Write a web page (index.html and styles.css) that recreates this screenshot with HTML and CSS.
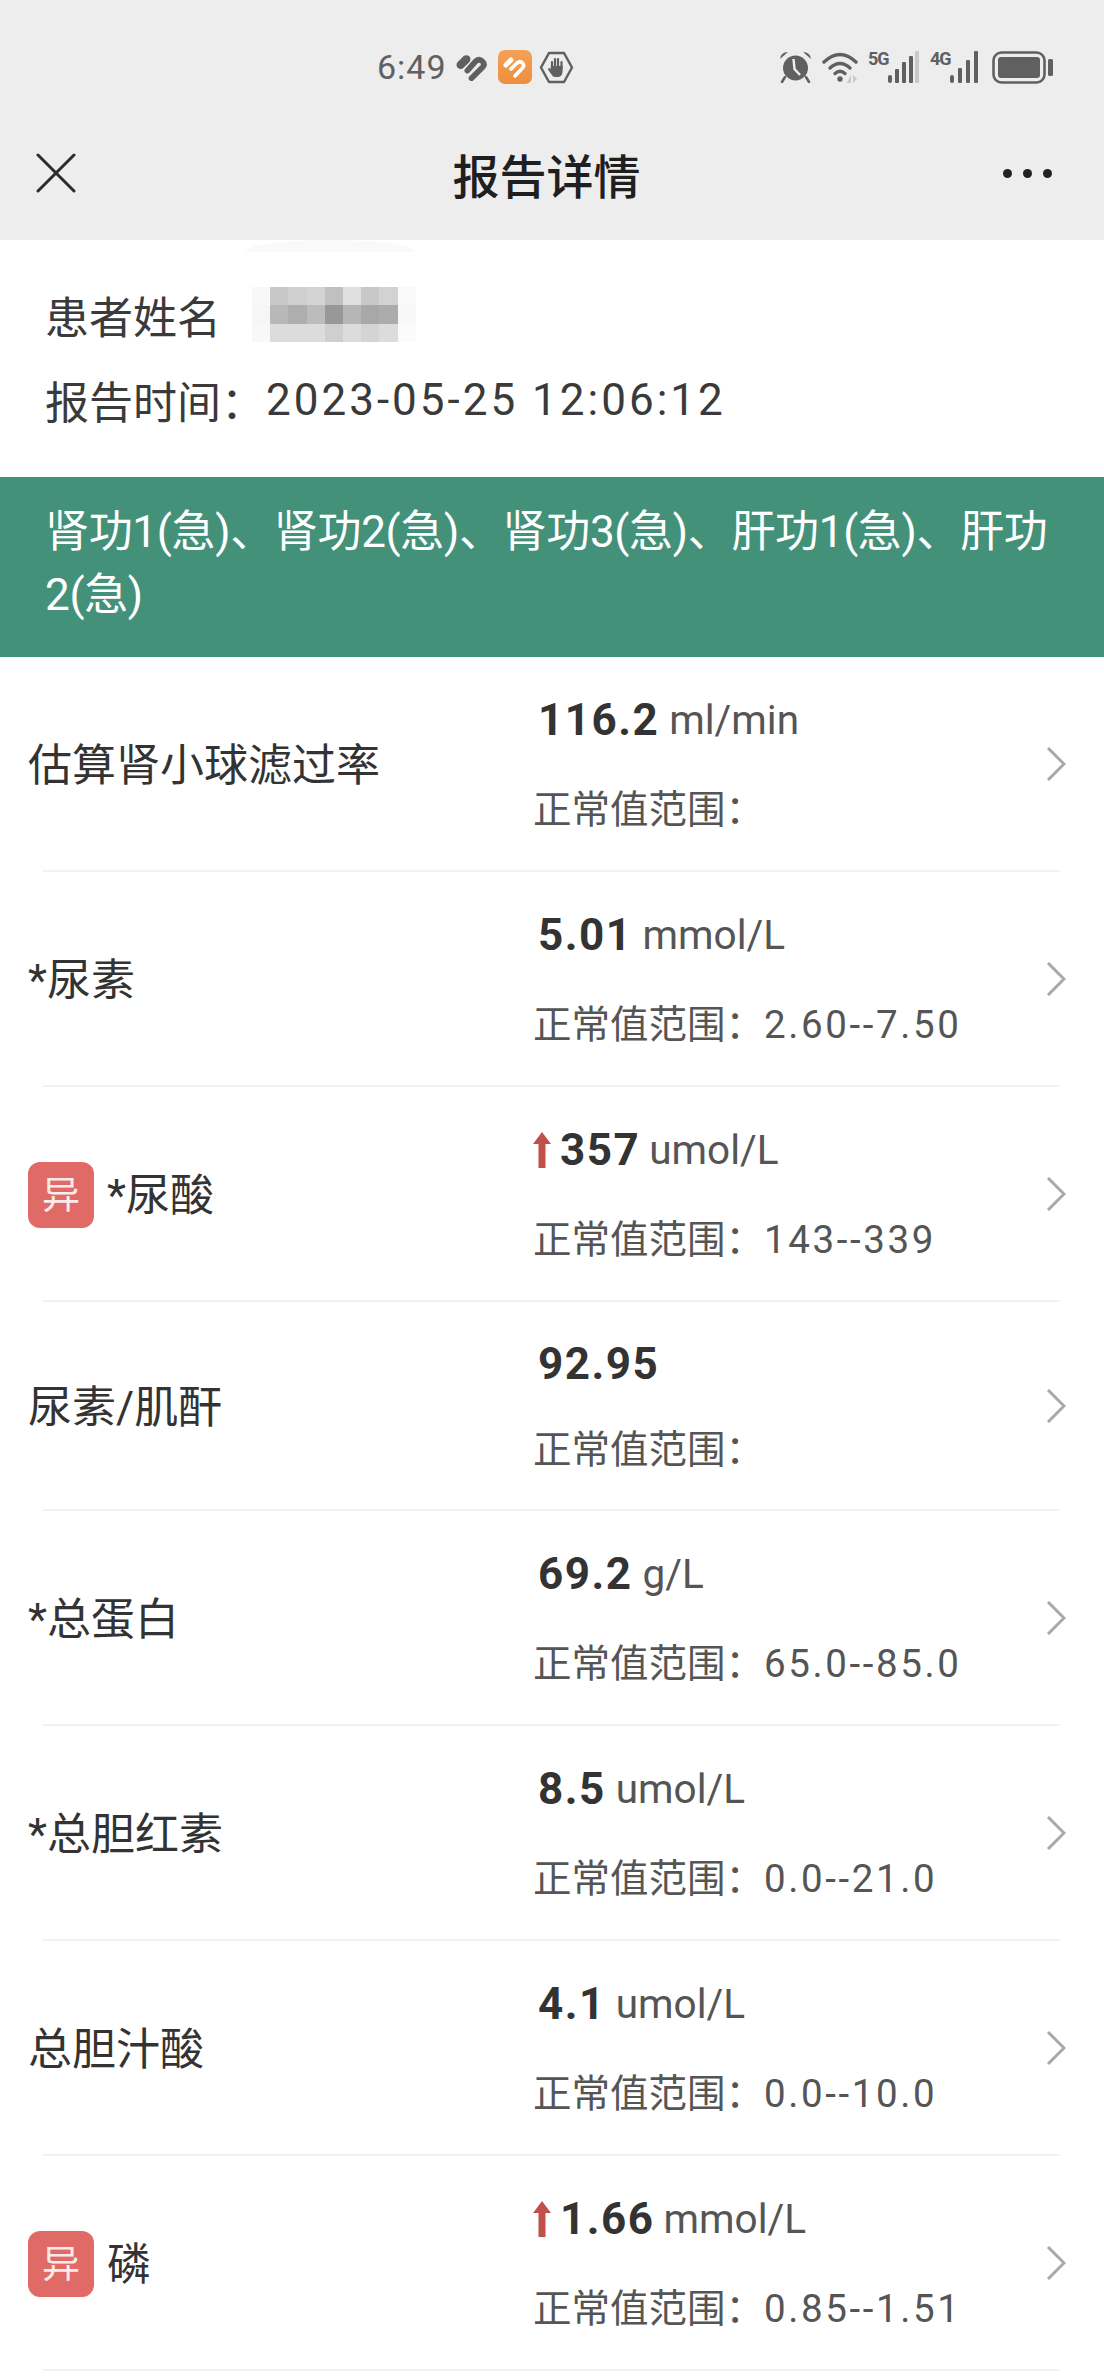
FILE: index.html
```html
<!DOCTYPE html>
<html lang="zh-CN">
<head>
    <meta charset="UTF-8">
    <meta name="viewport" content="width=device-width, initial-scale=1.0">
    <title>报告详情</title>
    <link rel="stylesheet" href="styles.css">
</head>
<body>

<div class="header">
    <div class="status-bar">
        <div class="status-left">
            <span class="clock">6:49</span>
            <svg class="ic-heart" width="32" height="28" viewBox="0 0 31 27" fill="none" stroke="#606060" stroke-linecap="round">
                <path d="M4.500 11.500 L10 6" stroke-width="8"/>
                <path d="M11 17 L19 8 Q22.500 5 25.500 8 Q28.500 11 25.500 14 L15 24.500" stroke-width="5.500"/>
            </svg>
            <svg class="ic-app" width="34" height="34" viewBox="0 0 34 34" fill="none">
                <defs>
                    <linearGradient id="app-bg" x1="0" y1="0" x2="0" y2="1">
                        <stop offset="0" stop-color="#f4a258"/>
                        <stop offset="1" stop-color="#ee8e3c"/>
                    </linearGradient>
                </defs>
                <rect width="34" height="34" rx="7" fill="url(#app-bg)"/>
                <path d="M8 15 L13 10" stroke="#fff" stroke-width="5" stroke-linecap="round"/>
                <path d="M13 19 L19 13 Q22 10.500 24.500 13 Q27 15.500 24.500 18 L17 26" stroke="#fff" stroke-width="3.600" stroke-linecap="round"/>
            </svg>
            <svg class="ic-hand" width="35" height="33" viewBox="0 0 35 33" fill="none" stroke="#606060">
                <path d="M10 2 H25 L33 16.500 L25 31 H10 L2 16.500 Z" stroke-width="2.500" stroke-linejoin="round"/>
                <path d="M13 17 V11 M16 17 V8 M19 17 V8 M22.500 18 V11" stroke-width="2.200" stroke-linecap="round"/>
                <path d="M11.800 15 H23.600 V20 Q23.500 26 18.500 26 H16 Q14 26 12.500 23.500 L9 18.500 Q10 16 12 18 Z" fill="#606060" stroke="none"/>
            </svg>
        </div>
        <div class="status-right">
            <svg class="ic-alarm" width="33" height="32" viewBox="0 0 33 32" fill="#606060">
                <circle cx="16.500" cy="17" r="12.500"/>
                <path d="M1 8 Q2 1 9 1 Z M32 8 Q31 1 24 1 Z"/>
                <path d="M6 26 L3 31 M27 26 L30 31" stroke="#606060" stroke-width="2.500" stroke-linecap="round"/>
                <path d="M14.500 8 L15.500 18 L21 24" fill="none" stroke="#ededed" stroke-width="2.500"/>
            </svg>
            <svg class="ic-wifi" width="38" height="32" viewBox="0 0 38 32" fill="none" stroke="#606060" stroke-linecap="round">
                <path d="M2 11 Q18 -4 34 11" stroke-width="3.400"/>
                <path d="M8 17 Q18 8 28 17" stroke-width="3.400"/>
                <path d="M13 22.500 Q18 18 23 22.500" stroke-width="3.400"/>
                <circle cx="18" cy="28" r="2.700" fill="#606060" stroke="none"/>
                <path d="M29 24 V32 L25 32 Z M31 24 V32 L35 28 Z" fill="#c9c9c9" stroke="none"/>
            </svg>
            <div class="signal">
                <span class="net">5G</span>
                <svg width="33" height="32" viewBox="0 0 33 32" fill="#606060">
                    <rect x="2" y="24" width="4" height="8" rx="2"/>
                    <rect x="9" y="18" width="4" height="14" rx="1"/>
                    <rect x="16" y="11" width="4" height="21" rx="1"/>
                    <rect x="23" y="5" width="4" height="27" rx="1"/>
                    <rect x="29" y="0" width="4" height="32" rx="1" fill="#c9c9c9"/>
                </svg>
            </div>
            <div class="signal">
                <span class="net">4G</span>
                <svg width="33" height="32" viewBox="0 0 33 32" fill="#606060">
                    <rect x="2" y="24" width="4" height="8" rx="2"/>
                    <rect x="10" y="17" width="4" height="15" rx="1"/>
                    <rect x="18" y="9" width="4" height="23" rx="1"/>
                    <rect x="26" y="0" width="4" height="32" rx="1"/>
                </svg>
            </div>
            <svg class="ic-battery" width="61" height="33" viewBox="0 0 61 33" fill="#606060">
                <rect x="1.500" y="1.500" width="51" height="30" rx="8" fill="none" stroke="#606060" stroke-width="2.600"/>
                <rect x="6" y="6" width="42" height="21" rx="3"/>
                <rect x="56" y="8" width="5" height="17" rx="1.500"/>
            </svg>
        </div>
    </div>
    <div class="nav">
        <svg class="ic-close" width="40" height="40" viewBox="0 0 40 40" fill="none" stroke="#2b2b2b" stroke-width="3" stroke-linecap="round">
            <path d="M2 2 L38 38 M38 2 L2 38"/>
        </svg>
        <div class="nav-title">报告详情</div>
        <div class="more"><i></i><i></i><i></i></div>
    </div>
</div>

<div class="patient">
    <div class="patient-line">
        <span>患者姓名</span>
        <svg class="mosaic" width="182" height="73" viewBox="0 0 10 4" shape-rendering="crispEdges">
            <rect x="0" y="0" width="1" height="1" fill="#f8f8f8"/><rect x="1" y="0" width="1" height="1" fill="#c8c8c8"/><rect x="2" y="0" width="1" height="1" fill="#d0d0d0"/><rect x="3" y="0" width="1" height="1" fill="#d4d4d4"/><rect x="4" y="0" width="1" height="1" fill="#c0c0c0"/><rect x="5" y="0" width="1" height="1" fill="#e0e0e0"/><rect x="6" y="0" width="1" height="1" fill="#c8c8c8"/><rect x="7" y="0" width="1" height="1" fill="#d2d2d2"/><rect x="8" y="0" width="1" height="1" fill="#fafafa"/>
            <rect x="0" y="1" width="1" height="1" fill="#f6f6f6"/><rect x="1" y="1" width="1" height="1" fill="#b8b8b8"/><rect x="2" y="1" width="1" height="1" fill="#aeaeae"/><rect x="3" y="1" width="1" height="1" fill="#bcbcbc"/><rect x="4" y="1" width="1" height="1" fill="#989898"/><rect x="5" y="1" width="1" height="1" fill="#b6b6b6"/><rect x="6" y="1" width="1" height="1" fill="#a8a8a8"/><rect x="7" y="1" width="1" height="1" fill="#acacac"/><rect x="8" y="1" width="1" height="1" fill="#f8f8f8"/>
            <rect x="0" y="2" width="1" height="1" fill="#f8f8f8"/><rect x="1" y="2" width="1" height="1" fill="#dcdcdc"/><rect x="2" y="2" width="1" height="1" fill="#dcdcdc"/><rect x="3" y="2" width="1" height="1" fill="#dcdcdc"/><rect x="4" y="2" width="1" height="1" fill="#cfcfcf"/><rect x="5" y="2" width="1" height="1" fill="#dcdcdc"/><rect x="6" y="2" width="1" height="1" fill="#d4d4d4"/><rect x="7" y="2" width="1" height="1" fill="#dcdcdc"/><rect x="8" y="2" width="1" height="1" fill="#fbfbfb"/>
        </svg>
    </div>
    <div class="patient-line">报告时间：<span class="date">2023-05-25 12:06:12</span></div>
</div>

<div class="band">肾功1(急)、肾功2(急)、肾功3(急)、肝功1(急)、肝功2(急)</div>

<div class="list">
    <div class="row">
        <div class="name">估算肾小球滤过率</div>
        <div class="data">
            <div class="value"><b>116.2</b> <span>ml/min</span></div>
            <div class="range">正常值范围：</div>
        </div>
        <svg class="chevron" width="20" height="34" viewBox="0 0 20 34" fill="none" stroke="#a8a8a8" stroke-width="3"><path d="M2 1 L18 17 L2 33"/></svg>
    </div>
    <div class="sep"></div>
    <div class="row">
        <div class="name">*尿素</div>
        <div class="data">
            <div class="value"><b>5.01</b> <span>mmol/L</span></div>
            <div class="range">正常值范围：<em>2.60--7.50</em></div>
        </div>
        <svg class="chevron" width="20" height="34" viewBox="0 0 20 34" fill="none" stroke="#a8a8a8" stroke-width="3"><path d="M2 1 L18 17 L2 33"/></svg>
    </div>
    <div class="sep"></div>
    <div class="row">
        <div class="name"><span class="badge">异</span>*尿酸</div>
        <div class="data">
            <div class="value high">
                <svg class="arrow" width="18" height="36" viewBox="0 0 18 36" fill="#c0504a"><path d="M9 0 L18 12 H12.500 V36 H5.500 V12 H0 Z"/></svg>
                <b>357</b> <span>umol/L</span>
            </div>
            <div class="range">正常值范围：<em>143--339</em></div>
        </div>
        <svg class="chevron" width="20" height="34" viewBox="0 0 20 34" fill="none" stroke="#a8a8a8" stroke-width="3"><path d="M2 1 L18 17 L2 33"/></svg>
    </div>
    <div class="sep"></div>
    <div class="row short">
        <div class="name">尿素/肌酐</div>
        <div class="data">
            <div class="value"><b>92.95</b></div>
            <div class="range">正常值范围：</div>
        </div>
        <svg class="chevron" width="20" height="34" viewBox="0 0 20 34" fill="none" stroke="#a8a8a8" stroke-width="3"><path d="M2 1 L18 17 L2 33"/></svg>
    </div>
    <div class="sep"></div>
    <div class="row">
        <div class="name">*总蛋白</div>
        <div class="data">
            <div class="value"><b>69.2</b> <span>g/L</span></div>
            <div class="range">正常值范围：<em>65.0--85.0</em></div>
        </div>
        <svg class="chevron" width="20" height="34" viewBox="0 0 20 34" fill="none" stroke="#a8a8a8" stroke-width="3"><path d="M2 1 L18 17 L2 33"/></svg>
    </div>
    <div class="sep"></div>
    <div class="row">
        <div class="name">*总胆红素</div>
        <div class="data">
            <div class="value"><b>8.5</b> <span>umol/L</span></div>
            <div class="range">正常值范围：<em>0.0--21.0</em></div>
        </div>
        <svg class="chevron" width="20" height="34" viewBox="0 0 20 34" fill="none" stroke="#a8a8a8" stroke-width="3"><path d="M2 1 L18 17 L2 33"/></svg>
    </div>
    <div class="sep"></div>
    <div class="row">
        <div class="name">总胆汁酸</div>
        <div class="data">
            <div class="value"><b>4.1</b> <span>umol/L</span></div>
            <div class="range">正常值范围：<em>0.0--10.0</em></div>
        </div>
        <svg class="chevron" width="20" height="34" viewBox="0 0 20 34" fill="none" stroke="#a8a8a8" stroke-width="3"><path d="M2 1 L18 17 L2 33"/></svg>
    </div>
    <div class="sep"></div>
    <div class="row">
        <div class="name"><span class="badge">异</span>磷</div>
        <div class="data">
            <div class="value high">
                <svg class="arrow" width="18" height="36" viewBox="0 0 18 36" fill="#c0504a"><path d="M9 0 L18 12 H12.500 V36 H5.500 V12 H0 Z"/></svg>
                <b>1.66</b> <span>mmol/L</span>
            </div>
            <div class="range">正常值范围：<em>0.85--1.51</em></div>
        </div>
        <svg class="chevron" width="20" height="34" viewBox="0 0 20 34" fill="none" stroke="#a8a8a8" stroke-width="3"><path d="M2 1 L18 17 L2 33"/></svg>
    </div>
    <div class="sep"></div>
</div>

</body>
</html>
```

FILE: styles.css
```css
html, body {
    height: 2376px;
    overflow: hidden;
}
body {
    margin: 0;
    background-color: #fff;
    color: #333;
    font-family: Roboto, "Noto Sans CJK SC", sans-serif;
}
.header {
    background-color: #ededed;
    height: 240px;
}
.status-bar {
    height: 134px;
    padding: 0 51px 0 377px;
    display: flex;
    justify-content: space-between;
    align-items: center;
    color: #606060;
}
.status-left, .status-right {
    display: flex;
    align-items: center;
}
.clock {
    font-size: 34px;
    letter-spacing: 1px;
    width: 79px;
}
.ic-app {
    margin-left: 10px;
}
.ic-hand {
    margin-left: 7px;
}
.ic-wifi {
    margin-left: 10px;
}
.signal {
    display: flex;
    align-items: flex-start;
    margin-left: 8px;
}
.signal + .signal {
    margin-left: 11px;
}
.net {
    font-size: 18px;
    font-weight: 700;
    line-height: 16px;
    letter-spacing: -1px;
    width: 18px;
}
.ic-battery {
    margin-left: 11px;
}
.nav {
    height: 78px;
    padding: 0 52px 0 36px;
    display: flex;
    align-items: center;
    justify-content: space-between;
}
.nav-title {
    font-size: 47px;
    font-weight: 500;
    color: #1f1f1f;
    margin-left: 14px;
}
.more {
    display: flex;
    gap: 11px;
}
.more i {
    width: 9px;
    height: 9px;
    border-radius: 50%;
    background-color: #222;
}
.patient {
    position: relative;
    height: 237px;
    padding: 32px 45px 0;
    box-sizing: border-box;
    font-size: 44px;
    color: #3a3a3a;
}
.patient::before {
    content: "";
    position: absolute;
    top: 0;
    left: 245px;
    width: 170px;
    height: 12px;
    border-radius: 50% 50% 0 0 / 100% 100% 0 0;
    background-color: #f9f9f9;
}
.patient-line {
    height: 85px;
    display: flex;
    align-items: center;
}
.mosaic {
    margin-left: 31px;
    margin-top: 17px;
}
.date {
    letter-spacing: 3px;
    margin-left: 1px;
}
.band {
    background-color: #44917a;
    color: #fff;
    font-size: 44px;
    line-height: 63px;
    letter-spacing: -0.33px;
    padding: 24px 40px 30px 45px;
    height: 180px;
    box-sizing: border-box;
}
.row {
    display: flex;
    align-items: center;
    height: 213px;
    padding: 0 38px 0 28px;
}
.row.short {
    height: 207px;
}
.name {
    width: 505px;
    flex: none;
    display: flex;
    align-items: center;
    margin-bottom: 4px;
    font-size: 44px;
    color: #333;
}
.badge {
    width: 66px;
    height: 66px;
    border-radius: 12px;
    margin-top: 6px;
    margin-right: 13px;
    background-color: #e06a66;
    color: #fbeaea;
    font-size: 38px;
    text-align: center;
    line-height: 66px;
}
.data {
    flex: 1;
    margin-top: 3px;
}
.value {
    height: 60px;
    display: flex;
    align-items: center;
    gap: 10px;
    padding-left: 5px;
    margin-bottom: 30px;
}
.row.short .value {
    margin-bottom: 26px;
}
.value b {
    font-size: 44px;
    font-weight: 700;
    letter-spacing: 1.500px;
}
.value span {
    font-size: 40.500px;
    color: #555;
}
.value.high {
    padding-left: 0;
    gap: 9px;
}
.arrow {
    flex: none;
}
.range {
    font-size: 38.500px;
    color: #555;
    line-height: 60px;
}
.range em {
    font-style: normal;
    letter-spacing: 2.600px;
}
.chevron {
    flex: none;
    margin-left: 8px;
}
.sep {
    height: 2px;
    margin: 0 44px 0 43px;
    background-color: #f2f2f2;
}
```
